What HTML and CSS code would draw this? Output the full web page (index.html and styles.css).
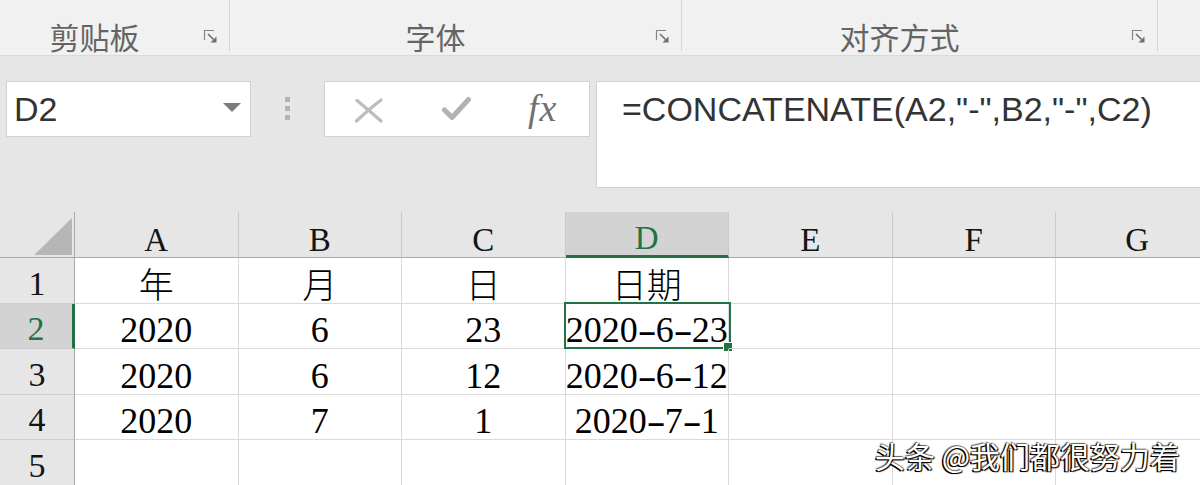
FILE: index.html
```html
<!DOCTYPE html>
<html lang="zh-CN">
<head>
<meta charset="utf-8">
<title>Excel</title>
<link rel="stylesheet" href="styles.css">
</head>
<body>
<div class="app">
  <div class="ribbon">
    <div class="group g1">
      <span class="glabel">剪贴板</span>
      <svg class="launcher" viewBox="0 0 14 14" width="14" height="14"><path d="M1.5 11V1.5H11" fill="none" stroke="#858585" stroke-width="1.2"/><path d="M5 5L10.5 10.5" stroke="#6f6f6f" stroke-width="1.6"/><path d="M13.5 13.5H7.5L13.5 7.5Z" fill="#6f6f6f"/></svg>
    </div>
    <div class="group g2">
      <span class="glabel">字体</span>
      <svg class="launcher" viewBox="0 0 14 14" width="14" height="14"><path d="M1.5 11V1.5H11" fill="none" stroke="#858585" stroke-width="1.2"/><path d="M5 5L10.5 10.5" stroke="#6f6f6f" stroke-width="1.6"/><path d="M13.5 13.5H7.5L13.5 7.5Z" fill="#6f6f6f"/></svg>
    </div>
    <div class="group g3">
      <span class="glabel">对齐方式</span>
      <svg class="launcher" viewBox="0 0 14 14" width="14" height="14"><path d="M1.5 11V1.5H11" fill="none" stroke="#858585" stroke-width="1.2"/><path d="M5 5L10.5 10.5" stroke="#6f6f6f" stroke-width="1.6"/><path d="M13.5 13.5H7.5L13.5 7.5Z" fill="#6f6f6f"/></svg>
    </div>
    <div class="group g4"></div>
  </div>

  <div class="fbar">
    <div class="namebox">
      <span class="nb-text">D2</span>
      <svg class="nb-arrow" viewBox="0 0 18 9" width="18" height="9"><path d="M0 0H18L9 9Z" fill="#7b7b7b"/></svg>
    </div>
    <div class="grip"><i></i><i></i><i></i></div>
    <div class="fbtns">
      <svg class="ic-x" viewBox="0 0 30 27" width="30" height="27"><path d="M3 3.5C11 10 19 17 27 24" fill="none" stroke="#bdbdbd" stroke-width="3.4" stroke-linecap="round"/><path d="M27 3C19 9 10 17 2.5 24" fill="none" stroke="#bdbdbd" stroke-width="3.4" stroke-linecap="round"/></svg>
      <svg class="ic-ok" viewBox="0 0 31 26" width="31" height="26"><path d="M3.5 14L11 21.5L27.5 3.5" fill="none" stroke="#b2b2b2" stroke-width="5" stroke-linecap="round" stroke-linejoin="round"/></svg>
      <span class="ic-fx">fx</span>
    </div>
    <div class="formula">=CONCATENATE(A2,"-",B2,"-",C2)</div>
  </div>

  <div class="sheet">
    <div class="hd corner"><div class="tri"></div></div>
    <div class="hd col">A</div>
    <div class="hd col">B</div>
    <div class="hd col">C</div>
    <div class="hd col sel">D</div>
    <div class="hd col">E</div>
    <div class="hd col">F</div>
    <div class="hd col">G</div>

    <div class="hd rowh">1</div>
    <div class="c cjk">年</div>
    <div class="c cjk">月</div>
    <div class="c cjk">日</div>
    <div class="c cjk">日期</div>
    <div class="c"></div>
    <div class="c"></div>
    <div class="c"></div>

    <div class="hd rowh sel">2</div>
    <div class="c">2020</div>
    <div class="c">6</div>
    <div class="c">23</div>
    <div class="c active">2020<span class="dash">-</span>6<span class="dash">-</span>23</div>
    <div class="c"></div>
    <div class="c"></div>
    <div class="c"></div>

    <div class="hd rowh">3</div>
    <div class="c">2020</div>
    <div class="c">6</div>
    <div class="c">12</div>
    <div class="c">2020<span class="dash">-</span>6<span class="dash">-</span>12</div>
    <div class="c"></div>
    <div class="c"></div>
    <div class="c"></div>

    <div class="hd rowh">4</div>
    <div class="c">2020</div>
    <div class="c">7</div>
    <div class="c">1</div>
    <div class="c">2020<span class="dash">-</span>7<span class="dash">-</span>1</div>
    <div class="c"></div>
    <div class="c"></div>
    <div class="c"></div>

    <div class="hd rowh">5</div>
    <div class="c"></div>
    <div class="c"></div>
    <div class="c"></div>
    <div class="c"></div>
    <div class="c"></div>
    <div class="c"></div>
    <div class="c"></div>
  </div>

  <div class="watermark">头条 @我们都很努力着</div>
</div>
</body>
</html>
```

FILE: styles.css
```css
* { box-sizing: border-box; }

html, body {
  margin: 0;
  padding: 0;
  width: 1200px;
  height: 485px;
  overflow: hidden;
  background: #e6e6e6;
}

.app {
  position: relative;
  width: 1200px;
  height: 485px;
  overflow: hidden;
}

/* ---------- ribbon ---------- */
.ribbon {
  display: flex;
  align-items: flex-start;
  height: 56px;
  background: #f1f1f1;
  border-bottom: 1px solid #dadada;
}

.group {
  display: flex;
  align-items: flex-start;
  height: 51px;
  border-right: 1px solid #d5d5d5;
}

.g1 { width: 230px; }
.g2 { width: 452px; }
.g3 { width: 476px; }
.g4 { flex: 1; border-right: none; }

.glabel {
  flex: 1;
  text-align: center;
  padding-right: 14px;
  padding-top: 21px;
  font-family: "Noto Sans CJK SC", "Noto Sans", sans-serif;
  font-size: 30px;
  line-height: 30px;
  color: #646464;
}

.launcher {
  flex: none;
  margin-top: 29px;
  margin-right: 12px;
}

/* ---------- formula bar ---------- */
.fbar {
  display: flex;
  align-items: flex-start;
  height: 156px;
  padding-top: 25px;
  background: #e6e6e6;
}

.namebox {
  display: flex;
  align-items: center;
  width: 245px;
  height: 56px;
  margin-left: 6px;
  background: #fff;
  border: 1px solid #d2d2d2;
}

.nb-text {
  padding-left: 7px;
  font-family: "Liberation Sans", Arial, sans-serif;
  font-size: 34px;
  line-height: 54px;
  color: #333;
}

.nb-arrow {
  margin-left: auto;
  margin-right: 9px;
  margin-top: -4px;
}

.grip {
  display: flex;
  flex-direction: column;
  gap: 4px;
  margin-left: 34px;
  margin-top: 16px;
}

.grip i {
  display: block;
  width: 5px;
  height: 5px;
  background: #b3b3b3;
}

.fbtns {
  display: flex;
  align-items: center;
  width: 266px;
  height: 56px;
  margin-left: 34px;
  background: #fff;
  border: 1px solid #d2d2d2;
}

.ic-x { margin-left: 29px; margin-top: 2px; }
.ic-ok { margin-left: 57px; margin-top: 0; }

.ic-fx {
  margin-left: 56px;
  font-family: "Liberation Serif", "Times New Roman", serif;
  font-style: italic;
  font-size: 38px;
  line-height: 40px;
  letter-spacing: 1px;
  color: #707070;
  margin-top: -2px;
}

.formula {
  flex: 1;
  height: 107px;
  margin-left: 6px;
  margin-right: -20px;
  padding: 8px 0 0 25px;
  background: #fff;
  border: 1px solid #d2d2d2;
  font-family: "Liberation Sans", Arial, sans-serif;
  font-size: 34px;
  line-height: 38px;
  color: #333;
  white-space: nowrap;
}

/* ---------- sheet ---------- */
.sheet {
  display: grid;
  grid-template-columns: 75px repeat(7, 163.5px);
  grid-template-rows: 46px repeat(5, 45.6px);
  width: 1220px;
  background: #fff;
}

.hd {
  display: flex;
  align-items: flex-end;
  justify-content: center;
  background: #e6e6e6;
  font-family: "Liberation Serif", "Times New Roman", serif;
  color: #141414;
}

.col {
  border-right: 1px solid #c9c9c9;
  border-bottom: 1px solid #a9a9a9;
  font-size: 33px;
  line-height: 33px;
}

.col.sel {
  background: #d3d3d3;
  border-bottom: 3px solid #217346;
  color: #217346;
}

.corner {
  justify-content: flex-end;
  padding: 0 2px 2px 0;
  border-right: 1px solid #a9a9a9;
  border-bottom: 1px solid #a9a9a9;
}

.tri {
  width: 38px;
  height: 37px;
  background: #b6b6b6;
  clip-path: polygon(100% 0, 100% 100%, 0 100%);
}

.rowh {
  border-right: 1px solid #a9a9a9;
  border-bottom: 1px solid #cdcdcd;
  font-size: 34px;
  line-height: 36px;
  padding-bottom: 1px;
}

.rowh.sel {
  background: #d3d3d3;
  border-right: 3px solid #217346;
  color: #217346;
}

.c {
  position: relative;
  display: flex;
  align-items: flex-end;
  justify-content: center;
  border-right: 1px solid #dadada;
  border-bottom: 1px solid #dadada;
  font-family: "Liberation Serif", "Times New Roman", "Noto Sans CJK SC", serif;
  font-size: 36px;
  line-height: 36px;
  color: #000;
  white-space: nowrap;
}

.c.cjk {
  font-family: "Noto Sans CJK SC", sans-serif;
  font-weight: 300;
  font-size: 35px;
  line-height: 40px;
}

.dash {
  display: inline-block;
  width: 0.5em;
  text-align: center;
  transform: scaleX(1.6);
}

.c.active::before {
  content: "";
  position: absolute;
  top: -2px;
  left: -2px;
  right: -3px;
  bottom: -1px;
  border: 2px solid #217346;
}

.c.active::after {
  content: "";
  position: absolute;
  right: -4px;
  bottom: -3px;
  width: 8px;
  height: 8px;
  background: #217346;
  border: 1px solid #fff;
  border-right: none;
  border-bottom: none;
}

/* ---------- watermark ---------- */
.watermark {
  position: absolute;
  left: 875px;
  top: 437px;
  font-family: "Noto Sans CJK SC", sans-serif;
  font-size: 30px;
  line-height: 36px;
  color: #fff;
  white-space: nowrap;
  text-shadow: -1.5px 1px 0 #000, 1px 1px 1px #000, -1px -1px 1px rgba(0, 0, 0, 0.6), 1px 0 1px rgba(0, 0, 0, 0.6);
}
```
